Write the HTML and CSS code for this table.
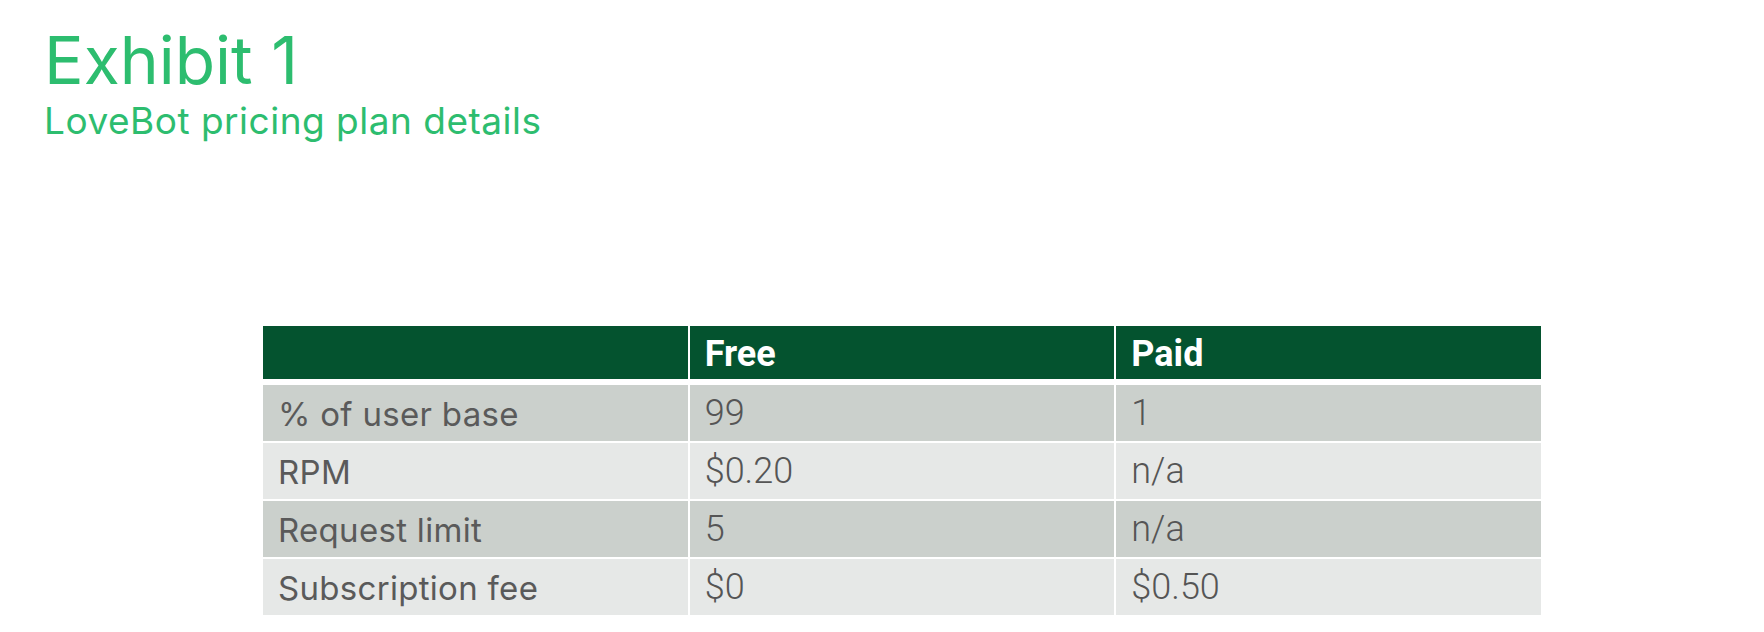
FILE: index.html
```html
<!DOCTYPE html>
<html lang="en">
<head>
<meta charset="utf-8">
<title>Exhibit 1</title>
<link rel="stylesheet" href="styles.css">
</head>
<body>
<header class="heading">
  <h1 class="title">Exhibit 1</h1>
  <p class="subtitle">LoveBot pricing plan details</p>
</header>
<section class="pricing">
  <div class="row row-head">
    <div class="cell"></div>
    <div class="cell">Free</div>
    <div class="cell">Paid</div>
  </div>
  <div class="row row-dark">
    <div class="cell label">% of user base</div>
    <div class="cell value">99</div>
    <div class="cell value">1</div>
  </div>
  <div class="row row-light">
    <div class="cell label">RPM</div>
    <div class="cell value">$0.20</div>
    <div class="cell value">n/a</div>
  </div>
  <div class="row row-dark">
    <div class="cell label">Request limit</div>
    <div class="cell value">5</div>
    <div class="cell value">n/a</div>
  </div>
  <div class="row row-light">
    <div class="cell label">Subscription fee</div>
    <div class="cell value">$0</div>
    <div class="cell value">$0.50</div>
  </div>
</section>
</body>
</html>
```
FILE: styles.css
```css
html, body {
  margin: 0;
  padding: 0;
  background: #ffffff;
}

body {
  width: 1764px;
  height: 632px;
  overflow: hidden;
  font-family: Inter, Lato, sans-serif;
}

.heading {
  padding: 27px 0 0 44px;
  color: #2dbd6f;
}

.title {
  margin: 0;
  font-size: 66px;
  line-height: 66px;
  font-weight: 400;
}

.subtitle {
  margin: 9px 0 0;
  font-size: 37px;
  line-height: 37px;
  font-weight: 400;
  letter-spacing: 0.5px;
}

.pricing {
  margin: 187px 0 0 263px;
  width: 1278px;
  display: flex;
  flex-direction: column;
  gap: 2px;
}

.row {
  display: grid;
  grid-template-columns: repeat(3, 1fr);
  column-gap: 2px;
  height: 56px;
}

.cell {
  display: flex;
  align-items: center;
  padding-left: 15px;
}

.row-head {
  height: 53px;
  margin-bottom: 4px;
}

.row-head .cell {
  background: #04532f;
  color: #ffffff;
  font-family: Roboto, "Liberation Sans", sans-serif;
  font-weight: 700;
  font-size: 36px;
  padding-top: 2px;
}

.row-dark .cell {
  background: #cbd0cc;
}

.row-light .cell {
  background: #e6e8e7;
}

.label {
  color: #5a5a5a;
  font-size: 33px;
  letter-spacing: 0.3px;
  padding-top: 2px;
}

.value {
  color: #555555;
  font-family: Roboto, "Liberation Sans", sans-serif;
  font-weight: 300;
  font-size: 36px;
}
```
